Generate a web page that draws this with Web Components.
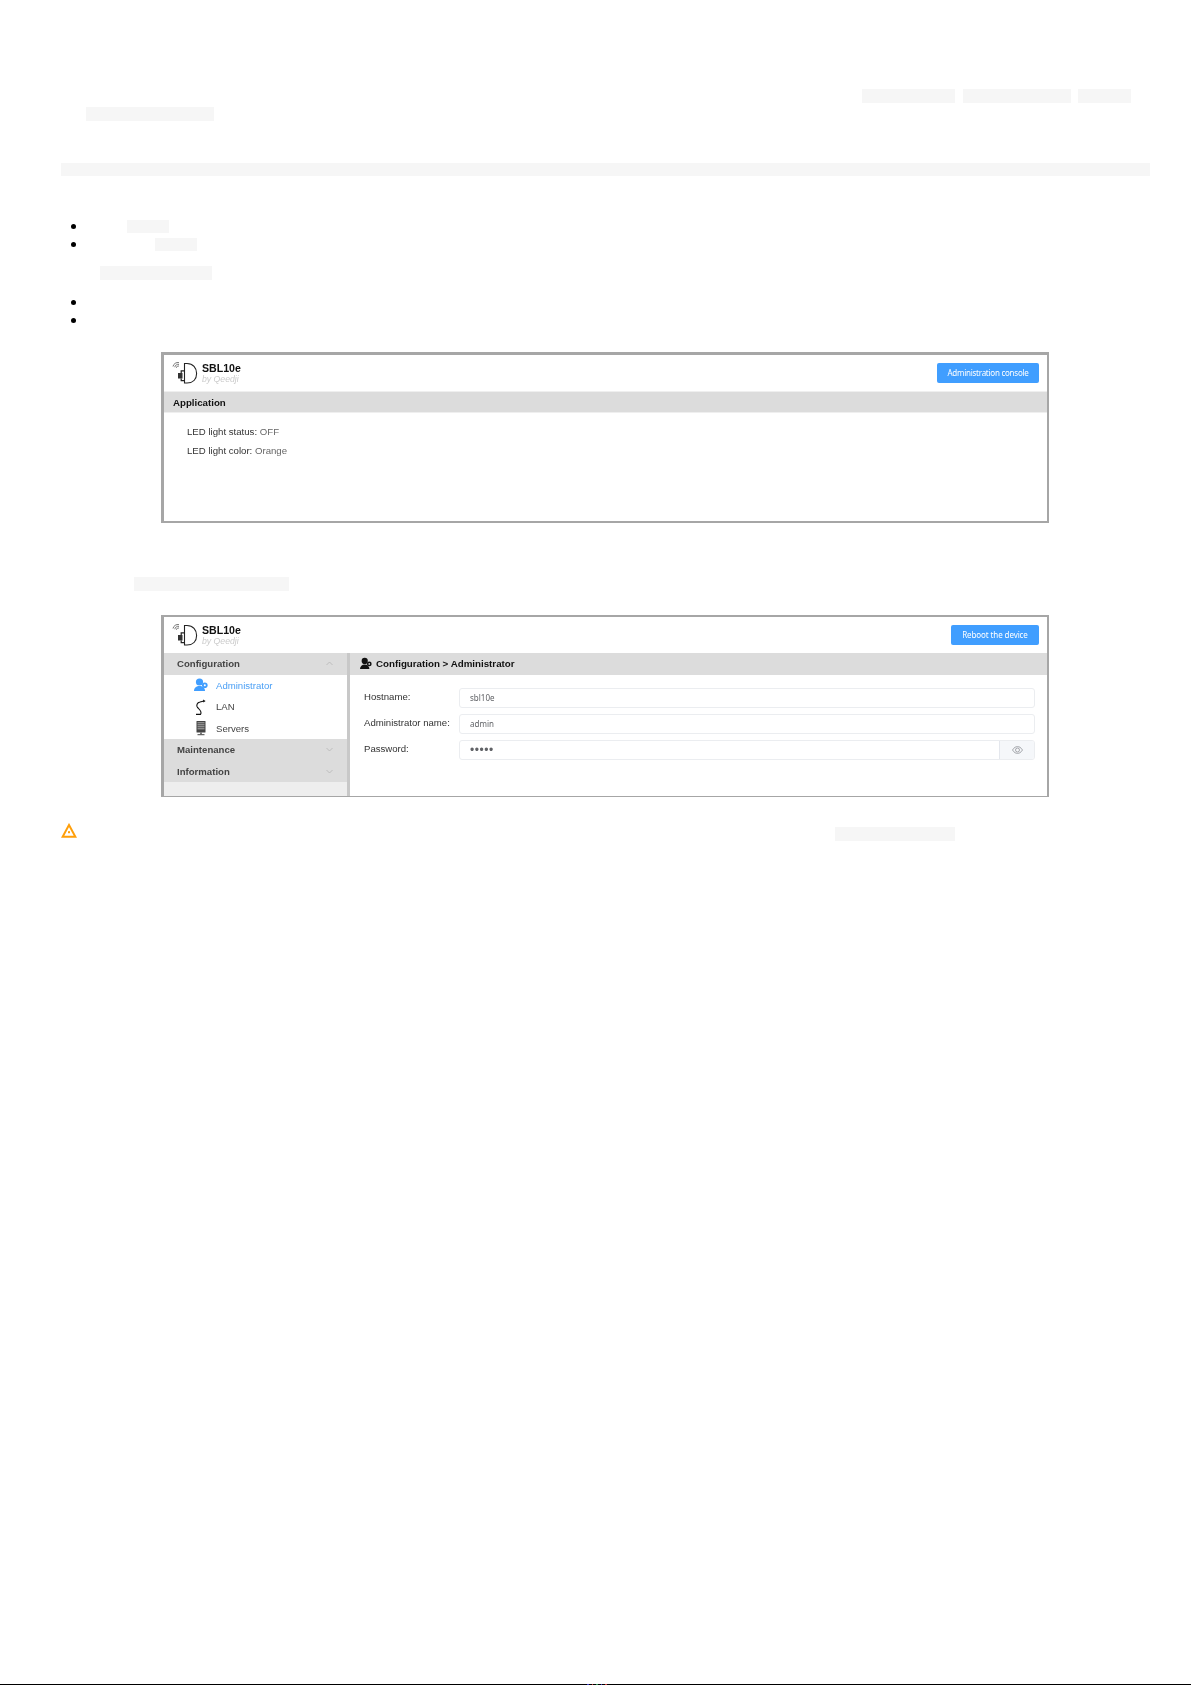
<!DOCTYPE html>
<html lang="en">
<head>
<meta charset="utf-8">
<title>SBL10e</title>
<style>
html,body{margin:0;padding:0;background:#fff}
body{font-family:"Liberation Sans",Arial,sans-serif;color:#333}
</style>
</head>
<body>
<template id="t-page"><style>
:host{display:flex;flex-direction:column;width:1191px;height:1685px;overflow:hidden;background:#fff}
.fill{flex:1}
.end{height:1px;background:#000;display:flex;padding-left:587px;gap:3px}
.end i{display:block;width:1.5px;height:1px}
</style><slot></slot><div class="fill"></div><div class="end"><i style="background:#3a3ac0"></i><i style="background:#c03a3a"></i><i style="background:#2f8f4f"></i><i style="background:#3a3ac0"></i><i style="background:#c03a3a"></i></div></template>

<template id="t-code"><style>
:host{display:block;background:#f6f6f6;flex:none}
</style></template>

<template id="t-line"><style>
:host{display:flex;align-items:flex-start}
</style><slot></slot></template>

<template id="t-bullet"><style>
:host{display:flex;align-items:center;padding-left:71px}
.dot{width:5px;height:5px;border-radius:50%;background:#000;flex:none}
</style><span class="dot"></span><slot></slot></template>

<template id="t-logo"><style>
:host{display:flex;align-items:flex-start;gap:3px;padding:6px 0 0 7px}
svg{display:block;flex:none}
.name{font-weight:700;font-size:10.6px;line-height:11px;color:#111;margin-top:2px}
.by{font-style:italic;font-size:8.7px;line-height:11px;color:#ccc}
</style><svg width="28" height="24" viewBox="0 0 28 24" fill="none" stroke="#222" aria-hidden="true">
<path d="M2 5.5 A5 5 0 0 1 8 1.6" stroke="#555" stroke-width=".8"/>
<path d="M3.8 6.2 A3.4 3.4 0 0 1 8 3.4" stroke="#555" stroke-width=".8"/>
<path d="M5.4 6.8 A1.8 1.8 0 0 1 8 5.2" stroke="#555" stroke-width=".8"/>
<path d="M13.5 2.5 H16 C22 2.5 25.6 6.8 25.6 12.5 C25.6 18.2 22 22 16 22 H13.5 Z" stroke-width="1.1"/>
<rect x="7" y="12" width="4.5" height="5.5" fill="#333" stroke="none"/>
<path d="M13.2 9.8 H10.2 V12 M13.2 19.6 H10.2 V17.5" stroke-width="1.2"/>
</svg><div><div class="name">SBL10e</div><div class="by">by Qeedji</div></div></template>

<template id="t-button"><style>
:host{display:flex;align-items:center;justify-content:center;height:20px;background:#409eff;border-radius:2px;color:#fff;font:8px/1 "Noto Sans",sans-serif;flex:none}
</style><slot></slot></template>

<template id="t-frame"><style>
:host{display:block;box-sizing:border-box;width:888px;margin-left:161px;border-style:solid;border-color:#a6a6a6;border-width:2px 2px 2px 3px;background:#fff;flex:none;filter:blur(.3px)}
.head{display:flex;justify-content:space-between;align-items:flex-start;box-sizing:border-box;height:36px}
.btn{padding:8px 8px 0 0}
</style><div class="head"><x-logo></x-logo><div class="btn"><slot name="action"></slot></div></div><slot></slot></template>

<template id="t-bar"><style>
:host{display:flex;align-items:center;gap:4px;height:22px;box-sizing:border-box;background:#dcdcdc;border-top:1px solid #efefef;border-bottom:1px solid #efefef;padding-left:9px;font-weight:700;font-size:9.7px;color:#111}
</style><slot></slot></template>

<template id="t-app"><style>
:host{display:block;height:108px;box-sizing:border-box;padding:9px 0 0 23px;font-size:9.63px;line-height:19px;color:#333}
::slotted(p){margin:0}
</style><slot></slot></template>

<template id="t-console"><style>
:host{display:grid;grid-template-columns:183px 3px 1fr;height:143px}
.side{background:#eee;display:flex;flex-direction:column}
.div{background:#c8c8c8}
.main{display:flex;flex-direction:column;min-width:0}
</style><div class="side"><slot name="side"></slot></div><div class="div"></div><div class="main"><slot></slot></div></template>

<template id="t-group"><style>
:host{display:flex;align-items:center;justify-content:space-between;height:21.5px;background:#dcdcdc;padding:0 14px 0 13px;font-weight:700;font-size:9.6px;color:#444;flex:none}
svg{display:block}
</style><slot></slot><svg width="7" height="5" viewBox="0 0 7 5" fill="none" stroke="#b5b5b5" stroke-width=".8"><path class="c"/></svg></template>

<template id="t-item"><style>
:host{display:flex;align-items:center;height:21.5px;background:#fff;padding-left:30px;gap:8px;font-size:9.6px;color:#444;flex:none}
:host([active]){color:#4a9ff5}
::slotted(svg){display:block;flex:none;width:14px;height:16px}
</style><slot></slot></template>

<template id="t-form"><style>
:host{display:flex;flex-direction:column;gap:6.5px;padding:13.5px 12px 0 14px}
</style><slot></slot></template>

<template id="t-field"><style>
:host{display:grid;grid-template-columns:95px 1fr;align-items:start;height:19.5px;font-size:9.6px;line-height:18px;color:#333}
.box{display:flex;box-sizing:border-box;height:19.5px;border:1px solid #ebedf0;border-radius:3px;overflow:hidden}
.val{flex:1;padding-left:10px;font:8px/17.5px "Noto Sans",sans-serif;color:#606266}
.eye{display:none;width:34px;background:#f5f7fa;border-left:1px solid #e4e7ed;align-items:center;justify-content:center}
:host([password]) .eye{display:flex}
:host([password]) .val{font:12px/18px "Liberation Sans",sans-serif;letter-spacing:.55px}
</style><slot></slot><div class="box"><div class="val"><slot name="value"></slot></div><div class="eye"><svg width="11" height="8" viewBox="0 0 11 8" fill="none" stroke="#909399" stroke-width=".8"><path d="M.5 4 C2.2 1.3 3.8 .6 5.5 .6 C7.2 .6 8.8 1.3 10.5 4 C8.8 6.7 7.2 7.4 5.5 7.4 C3.8 7.4 2.2 6.7 .5 4 Z"/><circle cx="5.5" cy="4" r="2"/></svg></div></div></template>

<x-page>
  <x-line style="margin-top:89px;height:14px">
    <x-code style="width:93px;height:14px;margin-left:862px"></x-code>
    <x-code style="width:108px;height:14px;margin-left:8px"></x-code>
    <x-code style="width:53px;height:14px;margin-left:7px"></x-code>
  </x-line>
  <x-line style="margin-top:4px;height:14px"><x-code style="width:128px;height:14px;margin-left:86px"></x-code></x-line>
  <x-line style="margin-top:42px;height:13px"><x-code style="width:1089px;height:13px;margin-left:61px"></x-code></x-line>
  <x-li style="margin-top:44px;height:13px"><x-code style="width:42px;height:13px;margin-left:51px"></x-code></x-li>
  <x-li style="margin-top:5px;height:13px"><x-code style="width:42px;height:13px;margin-left:79px"></x-code></x-li>
  <x-line style="margin-top:15px;height:14px"><x-code style="width:112px;height:14px;margin-left:100px"></x-code></x-line>
  <x-li style="margin-top:16px;height:13px"></x-li>
  <x-li style="margin-top:5px;height:13px"></x-li>

  <x-frame style="margin-top:25px;height:171px;border-top-width:3px">
    <x-button slot="action" style="width:102px;letter-spacing:-.25px">Administration console</x-button>
    <x-bar>Application</x-bar>
    <x-app>
      <p>LED light status: <span style="color:#666">OFF</span></p>
      <p>LED light color: <span style="color:#666">Orange</span></p>
    </x-app>
  </x-frame>

  <x-line style="margin-top:54px;height:14px"><x-code style="width:155px;height:14px;margin-left:134px"></x-code></x-line>

  <x-frame style="margin-top:24px;height:182px;border-bottom-width:1px">
    <x-button slot="action" style="width:88px;letter-spacing:-.1px">Reboot the device</x-button>
    <x-console>
      <x-group slot="side" open>Configuration</x-group>
      <x-item slot="side" active><svg viewBox="0 0 14 16" fill="#409eff"><circle cx="5.5" cy="5" r="3.6"/><path d="M0 14 C0 10.5 2.5 9 5.5 9 C8.5 9 11 10.5 11 14 Z"/><circle cx="10.8" cy="8.2" r="2.8"/><circle cx="10.8" cy="8.2" r="1" fill="#fff"/></svg>Administrator</x-item>
      <x-item slot="side"><svg viewBox="0 0 14 16" fill="none" stroke="#111" stroke-width="1.1"><path d="M2 15.4 H6.5 C8.5 12.5 5.5 10.5 3.5 8.5 C2 6.8 3 3.5 6 3 L10 2"/><path d="M9 .6 L11.6 1.9 L9.4 3.6 Z" fill="#111" stroke="none"/></svg>LAN</x-item>
      <x-item slot="side"><svg viewBox="0 0 14 16" fill="#444"><rect x="2.5" y="1" width="9" height="11.5" rx=".5"/><path d="M3.5 2.8h7M3.5 4.8h7M3.5 6.8h7M3.5 8.8h7" stroke="#ccc" stroke-width=".8"/><rect x="6.3" y="12.5" width="1.4" height="1.7"/><rect x="3.5" y="14.2" width="7" height="1"/></svg>Servers</x-item>
      <x-group slot="side">Maintenance</x-group>
      <x-group slot="side">Information</x-group>
      <x-bar style="border:0;font-size:9.75px;height:21.5px;padding-left:10px;gap:4px"><svg width="12" height="13" viewBox="0 0 14 15" fill="#111" style="display:block"><circle cx="5.5" cy="4.5" r="3.6"/><path d="M0 14 C0 10.5 2.5 8.6 5.5 8.6 C8.5 8.6 11 10.5 11 14 Z"/><circle cx="10.8" cy="8" r="2.8"/><circle cx="10.8" cy="8" r="1" fill="#dcdcdc"/></svg>Configuration &gt; Administrator</x-bar>
      <x-form>
        <x-field>Hostname:<span slot="value">sbl10e</span></x-field>
        <x-field>Administrator name:<span slot="value">admin</span></x-field>
        <x-field password>Password:<span slot="value">•••••</span></x-field>
      </x-form>
    </x-console>
  </x-frame>

  <x-line style="margin-top:26px;height:18px">
    <svg width="16" height="15" viewBox="0 0 16 15" style="margin-left:61px;display:block;flex:none" fill="none" stroke="#ff9f0a" stroke-width="2" stroke-linejoin="miter"><path d="M8 2 L14.4 13.8 H1.6 Z"/><rect x="7" y="8.2" width="2" height="2" fill="#ff9f0a" stroke="none"/></svg>
    <x-code style="width:120px;height:14px;margin:4px 0 0 758px"></x-code>
  </x-line>
</x-page>

<script>
function sr(el,id){el.attachShadow({mode:'open'}).appendChild(document.getElementById(id).content.cloneNode(true));}
[['x-page','t-page'],['x-code','t-code'],['x-line','t-line'],['x-li','t-bullet'],['x-logo','t-logo'],['x-button','t-button'],['x-frame','t-frame'],['x-bar','t-bar'],['x-app','t-app'],['x-console','t-console'],['x-item','t-item'],['x-form','t-form'],['x-field','t-field']].forEach(function(p){
  customElements.define(p[0],class extends HTMLElement{constructor(){super();sr(this,p[1]);}});
});
customElements.define('x-group',class extends HTMLElement{
  constructor(){super();sr(this,'t-group');}
  connectedCallback(){
    this.shadowRoot.querySelector('path').setAttribute('d',this.hasAttribute('open')?'M.5 4 L3.5 1 L6.5 4':'M.5 1 L3.5 4 L6.5 1');
  }
});
</script>
</body>
</html>
